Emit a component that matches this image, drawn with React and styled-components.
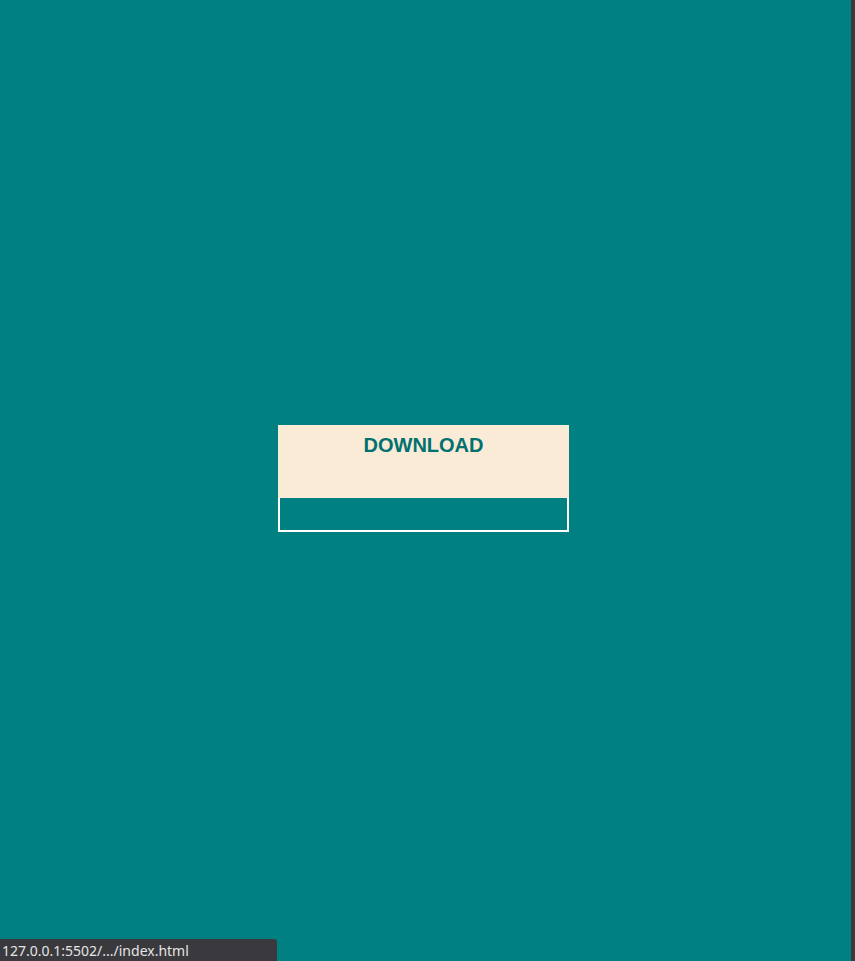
import React from "react";
import styled, { createGlobalStyle } from "styled-components";

const Global = createGlobalStyle`
  html, body { margin: 0; padding: 0; height: 100%; }
  body { background: #008080; font-family: "Liberation Sans", Arial, sans-serif; overflow: hidden; }
  #root { height: 100%; }
`;

const Page = styled.div`
  display: flex;
  width: 855px;
  height: 961px;
  background: #008080;
`;

const Main = styled.main`
  flex: 1;
  display: flex;
  align-items: center;
  justify-content: center;
  padding: 0 4px 4px 0;
`;

const Edge = styled.div`
  width: 4px;
  background: #3a3a3e;
`;

const Card = styled.div`
  width: 291px;
  height: 107px;
  background: #faebd7;
  display: flex;
  flex-direction: column;
  box-sizing: border-box;
`;

const Title = styled.h2`
  margin: 0;
  padding-top: 9px;
  height: 73px;
  box-sizing: border-box;
  text-align: center;
  font-family: "Liberation Sans", Arial, sans-serif;
  font-weight: 700;
  font-size: 20px;
  line-height: 23px;
  color: #007070;
`;

const Bar = styled.div`
  flex: 1;
  background: #008080;
  border: 2px solid #ffffff;
  border-top: none;
`;

const Status = styled.div`
  position: fixed;
  left: 0;
  bottom: 0;
  width: 277px;
  height: 22px;
  box-sizing: border-box;
  padding: 2px 0 0 2px;
  background: #3a3a3e;
  border-top-right-radius: 3px;
  color: #e4e4e4;
  font-family: "Noto Sans", "Open Sans", sans-serif;
  font-size: 14px;
  line-height: 20px;
  white-space: nowrap;
`;

export default function App() {
  return (
    <>
      <Global />
      <Page>
        <Main>
          <Card>
            <Title>DOWNLOAD</Title>
            <Bar />
          </Card>
        </Main>
        <Edge />
      </Page>
      <Status>127.0.0.1:5502/.../index.html</Status>
    </>
  );
}
